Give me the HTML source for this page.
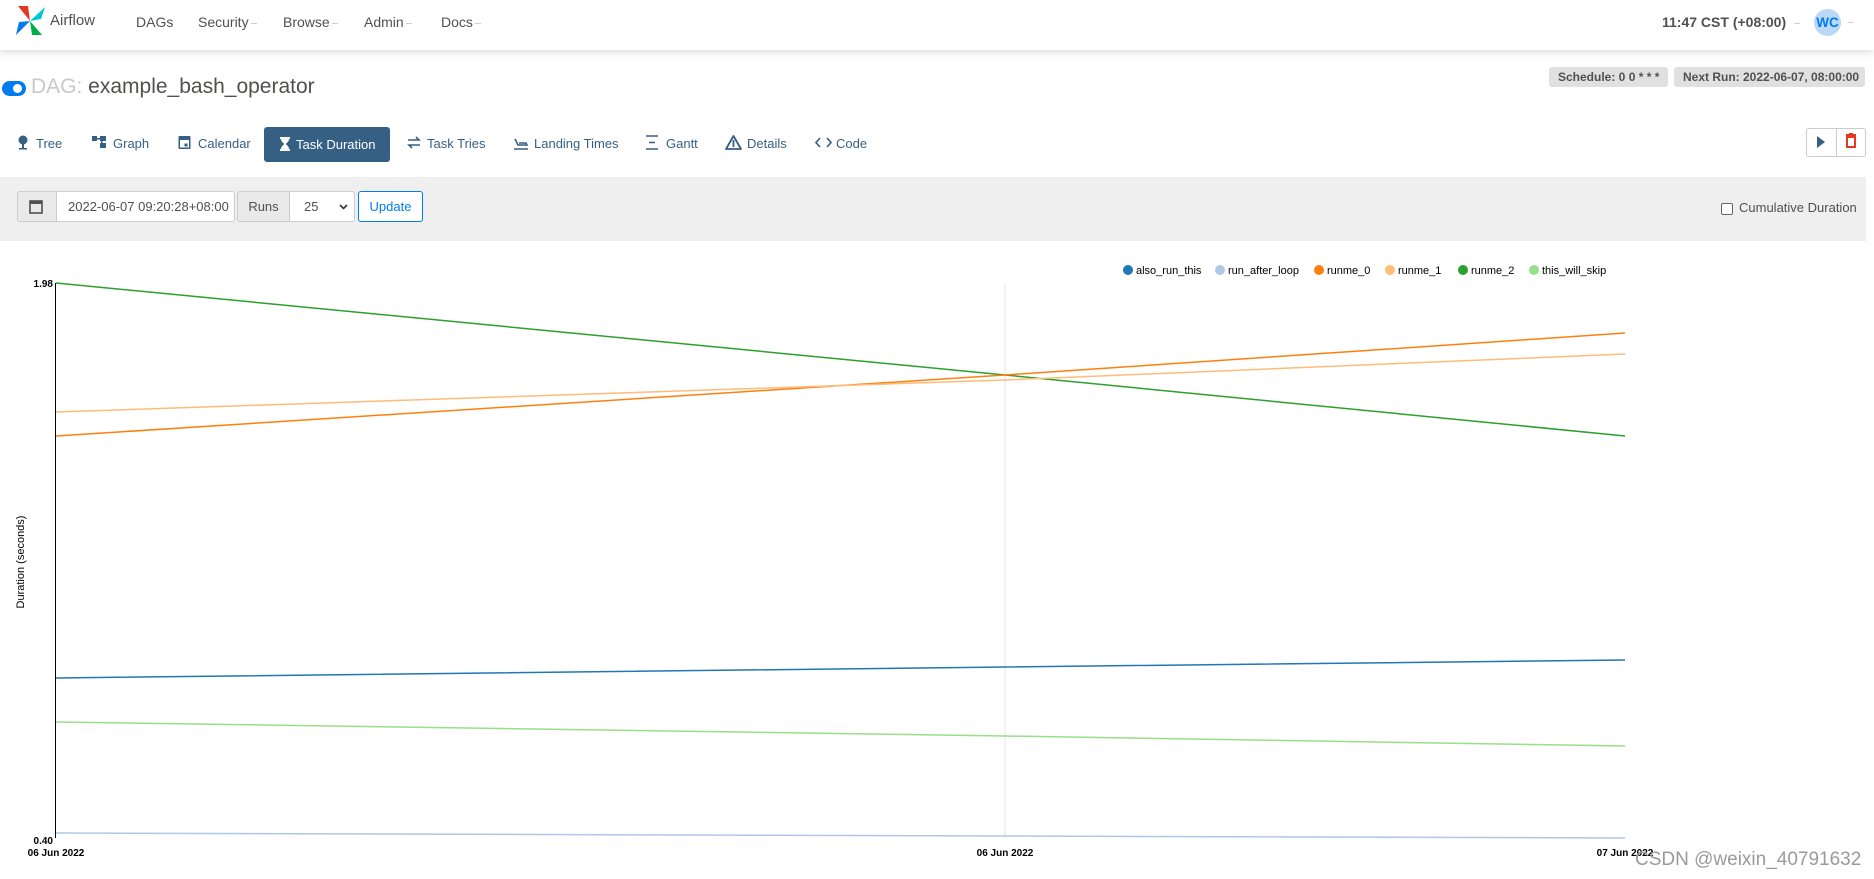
<!DOCTYPE html>
<html><head><meta charset="utf-8"><style>
*{box-sizing:border-box;margin:0;padding:0}
body{width:1874px;height:879px;overflow:hidden;background:#fff;font-family:"Liberation Sans",Arial,sans-serif;color:#51504f;position:relative}
.abs{position:absolute;white-space:nowrap}
.nav{position:absolute;left:0;top:0;width:1874px;height:50px;background:#fff;box-shadow:0 2px 8px rgba(0,0,0,.15)}
.ni{font-size:14px;color:#51504f;top:14px}
.car{display:inline-block;width:6px;height:1px;background:#d8c8d8;margin-left:2px;vertical-align:middle}
.badge{background:#e0e0e0;border-radius:3px;font-size:12.5px;font-weight:bold;color:#51504f;height:20px;line-height:20px;padding:0 9px;top:67px}
.tab{font-size:13px;color:#365f84;top:136px}
.ic{position:absolute;top:135px}
</style></head><body>
<div class="nav"></div>
<svg class="abs" style="left:14px;top:4px" width="34" height="34" viewBox="0 0 32 34">
<polygon points="15,17 3,2 13,2" fill="#e43921"/>
<polygon points="15,17 30,3 26,15" fill="#00c7d4"/>
<polygon points="15,17 27,31 17,31" fill="#00ad46"/>
<polygon points="15,17 1,31 4,18" fill="#017cee"/>
</svg>
<div class="abs" style="left:50px;top:12px;font-size:15px;color:#51504f">Airflow</div>
<div class="abs ni" style="left:136px">DAGs</div>
<div class="abs ni" style="left:198px">Security<span class="car"></span></div>
<div class="abs ni" style="left:283px">Browse<span class="car"></span></div>
<div class="abs ni" style="left:364px">Admin<span class="car"></span></div>
<div class="abs ni" style="left:441px">Docs<span class="car"></span></div>
<div class="abs ni" style="left:1662px;font-weight:bold;font-size:14px">11:47 CST (+08:00)<span class="car" style="margin-left:8px"></span></div>
<div class="abs" style="left:1814px;top:9px;width:27px;height:27px;border-radius:50%;background:#bcd8f8;color:#017cee;font-size:13.5px;font-weight:bold;text-align:center;line-height:27px">WC</div>
<span class="abs car" style="left:1846px;top:22px"></span>

<div class="abs" style="left:2px;top:81px;width:24px;height:15px;border-radius:8px;background:#017cee"></div>
<div class="abs" style="left:13px;top:84px;width:9px;height:9px;border-radius:50%;background:#fff"></div>
<div class="abs" style="left:31px;top:75px;font-size:21px;color:#51504f"><span style="color:#c8c8c8">DAG:</span> example_bash_operator</div>
<div class="abs badge" style="left:1549px;width:119px;font-size:12px">Schedule: 0 0 * * *</div>
<div class="abs badge" style="left:1674px;width:191px;font-size:12px">Next Run: 2022-06-07, 08:00:00</div>

<svg class="ic" style="left:17px" width="12" height="15"><circle cx="6" cy="5" r="4.5" fill="#365f84"/><rect x="5" y="8" width="2" height="6" fill="#365f84"/><rect x="2" y="13" width="8" height="1.5" fill="#365f84"/></svg>
<div class="abs tab" style="left:36px">Tree</div>
<svg class="ic" style="left:92px" width="15" height="14"><rect x="0" y="1" width="5" height="5" fill="#365f84"/><rect x="8" y="1" width="6" height="5" fill="#365f84"/><rect x="8" y="8" width="6" height="5" fill="#365f84"/><rect x="4" y="3" width="5" height="1.5" fill="#365f84"/><rect x="9" y="5" width="1.5" height="4" fill="#365f84"/></svg>
<div class="abs tab" style="left:113px">Graph</div>
<svg class="ic" style="left:178px" width="13" height="15"><rect x="0.5" y="1" width="12" height="13" rx="1" fill="#365f84"/><rect x="2" y="5" width="9" height="7.5" fill="#fff"/><rect x="6.5" y="8.5" width="3" height="3" fill="#365f84"/></svg>
<div class="abs tab" style="left:198px">Calendar</div>
<div class="abs" style="left:264px;top:127px;width:126px;height:35px;background:#365f84;border-radius:3px;color:#fff;font-size:13px;line-height:35px;padding-left:16px"><svg width="10" height="14" style="vertical-align:-2px;margin-right:6px"><path d="M0 0h10v2H9c0 3-3 4-3 5s3 2 3 5h1v2H0v-2h1c0-3 3-4 3-5S1 5 1 2H0z" fill="#fff"/></svg>Task Duration</div>
<svg class="ic" style="left:407px" width="14" height="14"><path d="M1 5h11l-3-3M13 10H2l3 3" stroke="#365f84" stroke-width="1.6" fill="none"/></svg>
<div class="abs tab" style="left:427px">Task Tries</div>
<svg class="ic" style="left:513px" width="16" height="15"><path d="M1 14h14M2 4l3 6h9l-1-2H6" stroke="#365f84" stroke-width="1.6" fill="none"/></svg>
<div class="abs tab" style="left:534px">Landing Times</div>
<svg class="ic" style="left:645px" width="14" height="15"><path d="M1 1h12M4 7.5h6M1 14h12" stroke="#365f84" stroke-width="1.5"/></svg>
<div class="abs tab" style="left:666px">Gantt</div>
<svg class="ic" style="left:725px" width="17" height="15"><path d="M8.5 1L1 14h15z" stroke="#365f84" stroke-width="1.8" fill="none" stroke-linejoin="round"/><path d="M8.5 5v7" stroke="#365f84" stroke-width="1.8"/></svg>
<div class="abs tab" style="left:747px">Details</div>
<svg class="ic" style="left:815px" width="17" height="15"><path d="M5 3L1 7.5l4 4.5M12 3l4 4.5-4 4.5" stroke="#365f84" stroke-width="1.6" fill="none"/></svg>
<div class="abs tab" style="left:836px">Code</div>
<div class="abs" style="left:1806px;top:128px;width:60px;height:29px;border:1px solid #ccc;border-radius:3px"></div>
<div class="abs" style="left:1836px;top:128px;width:1px;height:29px;background:#ccc"></div>
<svg class="abs" style="left:1816px;top:134px" width="10" height="16"><path d="M1 2l8 6-8 6z" fill="#365f84"/></svg>
<svg class="abs" style="left:1845px;top:133px" width="12" height="16"><path d="M1 2h10M4 1h4" stroke="#e43921" stroke-width="2"/><rect x="2" y="4" width="8" height="10" stroke="#e43921" stroke-width="2" fill="none"/></svg>

<div class="abs" style="left:0;top:177px;width:1866px;height:64px;background:#efefef"></div>
<div class="abs" style="left:17px;top:191px;width:40px;height:31px;border:1px solid #ccc;background:#e9e9e9;border-radius:3px 0 0 3px"></div>
<svg class="abs" style="left:29px;top:199px" width="14" height="15"><rect x="1" y="2" width="12" height="12" stroke="#51504f" stroke-width="1.6" fill="none"/><rect x="1" y="2" width="12" height="3" fill="#51504f"/></svg>
<div class="abs" style="left:56px;top:191px;width:179px;height:31px;border:1px solid #ccc;background:#fff;border-radius:0 3px 3px 0;font-size:13px;line-height:29px;padding-left:11px;overflow:hidden">2022-06-07 09:20:28+08:00</div>
<div class="abs" style="left:237px;top:191px;width:53px;height:31px;border:1px solid #ccc;background:#e9e9e9;border-radius:3px 0 0 3px;font-size:13px;line-height:29px;text-align:center">Runs</div>
<div class="abs" style="left:289px;top:191px;width:66px;height:31px;border:1px solid #ccc;background:#fff;border-radius:0 3px 3px 0;font-size:13px;line-height:29px;padding-left:14px">25<svg style="position:absolute;left:49px;top:12px" width="9" height="6"><path d="M1 1l3.5 3.5L8 1" stroke="#333" stroke-width="1.6" fill="none"/></svg></div>
<div class="abs" style="left:358px;top:191px;width:65px;height:31px;border:1px solid #017cee;background:#fff;border-radius:3px;font-size:13px;line-height:29px;text-align:center;color:#017cee">Update</div>
<div class="abs" style="left:1721px;top:203px;width:12px;height:12px;border:1px solid #666;border-radius:2px;background:#fff"></div>
<div class="abs" style="left:1739px;top:200px;font-size:13px;color:#51504f">Cumulative Duration</div>

<svg class="abs" style="left:0;top:0" width="1874" height="879" font-family="Liberation Sans, Arial, sans-serif">
<g font-size="11" fill="#000">
<circle cx="1128" cy="270" r="5" fill="#1f77b4"/><text x="1136" y="274">also_run_this</text>
<circle cx="1220" cy="270" r="5" fill="#aec7e8"/><text x="1228" y="274">run_after_loop</text>
<circle cx="1319" cy="270" r="5" fill="#ff7f0e"/><text x="1327" y="274">runme_0</text>
<circle cx="1390" cy="270" r="5" fill="#ffbb78"/><text x="1398" y="274">runme_1</text>
<circle cx="1463" cy="270" r="5" fill="#2ca02c"/><text x="1471" y="274">runme_2</text>
<circle cx="1534" cy="270" r="5" fill="#98df8a"/><text x="1542" y="274">this_will_skip</text>
</g>
<line x1="1005" y1="283" x2="1005" y2="838" stroke="#e5e5e5"/>
<line x1="55.5" y1="283" x2="55.5" y2="838" stroke="#000" stroke-width="1"/>
<g fill="none" stroke-width="1.5">
<polyline points="56,283 1005,375 1625,436" stroke="#2ca02c"/>
<polyline points="56,436 1005,375 1625,333" stroke="#ff7f0e"/>
<polyline points="56,412 1005,380 1625,354" stroke="#ffbb78"/>
<polyline points="56,678 1005,667 1625,660" stroke="#1f77b4"/>
<polyline points="56,722 1005,736 1625,746" stroke="#98df8a"/>
<polyline points="56,833 1005,836 1625,838" stroke="#aec7e8"/>
</g>
<g font-size="10" font-weight="bold" fill="#000">
<text x="53" y="287" text-anchor="end">1.98</text>
<text x="53" y="844" text-anchor="end">0.40</text>
<text x="56" y="856" text-anchor="middle">06 Jun 2022</text>
<text x="1005" y="856" text-anchor="middle">06 Jun 2022</text>
<text x="1625" y="856" text-anchor="middle">07 Jun 2022</text>
</g>
<text transform="translate(24,562) rotate(-90)" font-size="11" text-anchor="middle" fill="#000">Duration (seconds)</text>
<text x="1635" y="865" font-size="19" fill="#9a9a9a">CSDN @weixin_40791632</text>
</svg>
</body></html>
